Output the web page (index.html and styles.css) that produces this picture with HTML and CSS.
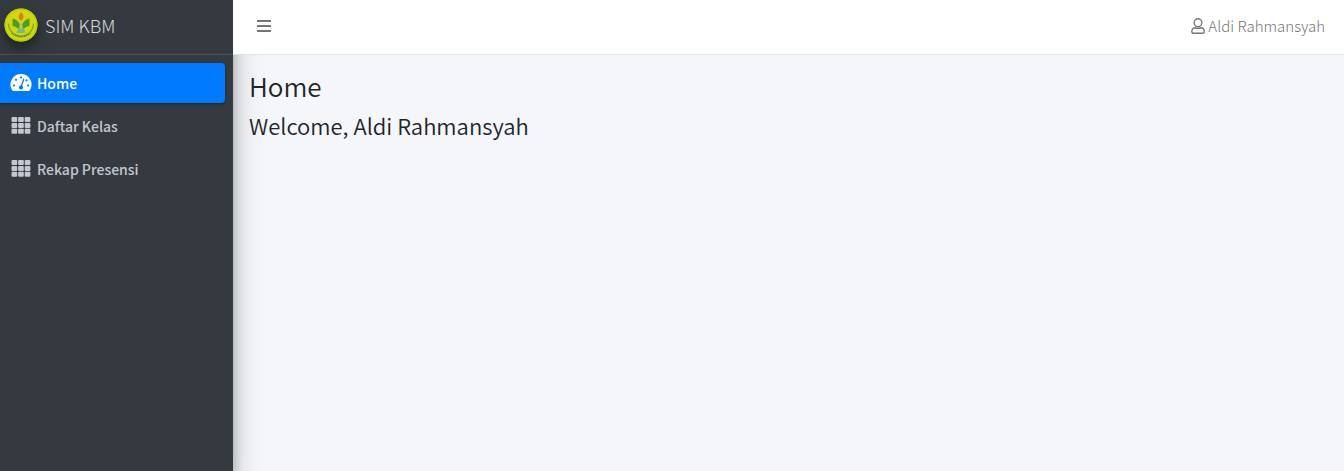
FILE: index.html
```html
<!DOCTYPE html>
<html lang="id">
<head>
<meta charset="utf-8">
<meta name="viewport" content="width=device-width, initial-scale=1">
<title>SIM KBM</title>
<link rel="stylesheet" href="styles.css">
</head>
<body>
<svg class="sprite" aria-hidden="true">
  <symbol id="grid" viewBox="0 0 19 17">
    <rect x="0" y="0" width="5.7" height="5" rx="1"/><rect x="6.6" y="0" width="5.7" height="5" rx="1"/><rect x="13.2" y="0" width="5.7" height="5" rx="1"/>
    <rect x="0" y="5.9" width="5.7" height="5" rx="1"/><rect x="6.6" y="5.9" width="5.7" height="5" rx="1"/><rect x="13.2" y="5.9" width="5.7" height="5" rx="1"/>
    <rect x="0" y="11.8" width="5.7" height="5" rx="1"/><rect x="6.6" y="11.8" width="5.7" height="5" rx="1"/><rect x="13.2" y="11.8" width="5.7" height="5" rx="1"/>
  </symbol>
</svg>
<div class="wrapper">
  <aside class="sidebar">
    <a class="brand" href="#">
      <svg class="brand-logo" viewBox="0 0 34 34" aria-hidden="true">
        <circle cx="17" cy="17" r="16.5" fill="#d2d60b"/>
        <circle cx="17" cy="17" r="15.8" fill="none" stroke="#b5cf12" stroke-width="1.400"/>
        <path d="M4.500 15.500a12.500 12.500 0 0 0 25 0" fill="none" stroke="#7fb519" stroke-width="1.500"/>
        <path d="M7.500 25q9.500 7.500 19 0" fill="none" stroke="#5d8f1c" stroke-width="1.500" stroke-dasharray="1.500 .7"/>
        <path d="M8.500 10.500q5 1 7.500 6v6q-3-4-7.500-4.500zM25.500 10.500q-5 1-7.500 6v6q3-4 7.500-4.500z" fill="#4b9a34"/>
        <path d="M16 15h2l1 6h-4z" fill="#b8ce35"/>
        <path d="M17 4q3.500 3.500 2 6.500-1 2-2 2t-2-2q-1-2.500 2-6.500z" fill="#df7c18"/>
        <path d="M14 20.500h6l1.500 4.500h-9z" fill="#76b89b"/>
      </svg>
      <span class="brand-text">SIM KBM</span>
    </a>
    <nav class="menu">
      <a class="menu-link active" href="#">
        <svg class="menu-icon" viewBox="0 0 22 19" aria-hidden="true">
          <path fill="#fff" d="M11 1A10.500 10.500 0 0 0 2 16.900q.6 1.100 1.500 1.100h15q.9 0 1.500-1.100A10.500 10.500 0 0 0 11 1z"/>
          <g fill="#007bff"><circle cx="11" cy="4.500" r="1.100"/><circle cx="6" cy="6.800" r="1.100"/><circle cx="4" cy="12.500" r="1.100"/><circle cx="18" cy="12.500" r="1.100"/><circle cx="16.500" cy="7.300" r="1.100"/><circle cx="11" cy="14.500" r="2.100"/></g>
          <path d="M11 14.500l2.600-8.300" stroke="#007bff" stroke-width="1.300" stroke-linecap="round"/>
        </svg>
        <span>Home</span>
      </a>
      <a class="menu-link" href="#"><svg class="menu-icon grid" aria-hidden="true"><use href="#grid"/></svg><span>Daftar Kelas</span></a>
      <a class="menu-link" href="#"><svg class="menu-icon grid" aria-hidden="true"><use href="#grid"/></svg><span>Rekap Presensi</span></a>
    </nav>
  </aside>
  <div class="page">
    <header class="topbar">
      <button class="toggle" type="button" aria-label="Menu">
        <svg class="bars" viewBox="0 0 14 14" aria-hidden="true"><path d="M0 2h14M0 7h14M0 12h14" stroke="currentColor" stroke-width="2"/></svg>
      </button>
      <a class="user" href="#">
        <svg class="user-icon" viewBox="0 0 14 16" fill="none" stroke="currentColor" stroke-width="1.400" aria-hidden="true"><circle cx="7" cy="4.700" r="3.900"/><path d="M4.300 9.800C2 9.800.8 11.500.8 13.700q0 1.500 1.400 1.500h9.600q1.400 0 1.400-1.500c0-2.200-1.200-3.900-3.500-3.900q-2.700 1-5.400 0z"/></svg>
        <span>Aldi Rahmansyah</span>
      </a>
    </header>
    <main class="content">
      <h1 class="title">Home</h1>
      <h2 class="welcome">Welcome, Aldi Rahmansyah</h2>
    </main>
  </div>
</div>
</body>
</html>
```
FILE: styles.css
```css
* {
  box-sizing: border-box;
}

body {
  margin: 0;
  background: #f4f6f9;
  color: #212529;
  font-family: "Source Sans Pro", "Noto Sans CJK SC", sans-serif;
  font-size: 14px;
  line-height: 24px;
}

a {
  color: inherit;
  text-decoration: none;
}

svg {
  flex: none;
}

.sprite {
  position: absolute;
  width: 0;
  height: 0;
}

.wrapper {
  display: flex;
  min-height: 100vh;
}

.sidebar {
  flex: none;
  width: 233px;
  background: #343a40;
  color: #c2c7d0;
  box-shadow: 0 14px 28px rgba(0, 0, 0, .25), 0 10px 10px rgba(0, 0, 0, .22);
}

.brand {
  display: flex;
  align-items: center;
  gap: 7px;
  height: 55px;
  padding: 0 4px 5px;
  border-bottom: 1px solid #4b545c;
}

.brand-logo {
  width: 34px;
  height: 34px;
  border-radius: 50%;
  box-shadow: 0 10px 20px rgba(0, 0, 0, .19), 0 6px 6px rgba(0, 0, 0, .23);
}

.brand-text {
  color: #d6d8d9;
  font-size: 18px;
  font-weight: 300;
}

.menu {
  display: flex;
  flex-direction: column;
  gap: 3px;
  padding: 8px 8px 8px 0;
}

.menu-link {
  display: flex;
  align-items: center;
  gap: 5px;
  height: 40px;
  padding: 0 10px;
  border-radius: 0 4px 4px 0;
  font-weight: 500;
}

.menu-link.active {
  background: #007bff;
  color: #fff;
  box-shadow: 0 1px 3px rgba(0, 0, 0, .12), 0 1px 2px rgba(0, 0, 0, .24);
}

.menu-icon {
  width: 22px;
  height: 19px;
  margin-bottom: 2px;
}

.menu-icon.grid {
  height: 17px;
  fill: currentColor;
}

.page {
  flex: 1;
  min-width: 0;
}

.topbar {
  position: relative;
  display: flex;
  align-items: center;
  justify-content: space-between;
  height: 55px;
  padding: 0 19px 2px 16px;
  background: #fff;
  border-bottom: 1px solid #dee2e6;
  color: #757575;
}

.toggle {
  display: flex;
  padding: 8px;
  border: 0;
  background: none;
  color: inherit;
}

.bars {
  width: 14px;
  height: 14px;
}

.user {
  display: flex;
  align-items: center;
  gap: 3px;
  font-size: 15px;
  font-weight: 300;
}

.user-icon {
  width: 14px;
  height: 16px;
}

.content {
  padding: 15px 16px;
}

.title {
  margin: 0 0 8px;
  font-size: 26px;
  font-weight: 350;
  line-height: 32px;
}

.welcome {
  margin: 0;
  font-size: 22px;
  font-weight: 350;
  line-height: 30px;
}
```
